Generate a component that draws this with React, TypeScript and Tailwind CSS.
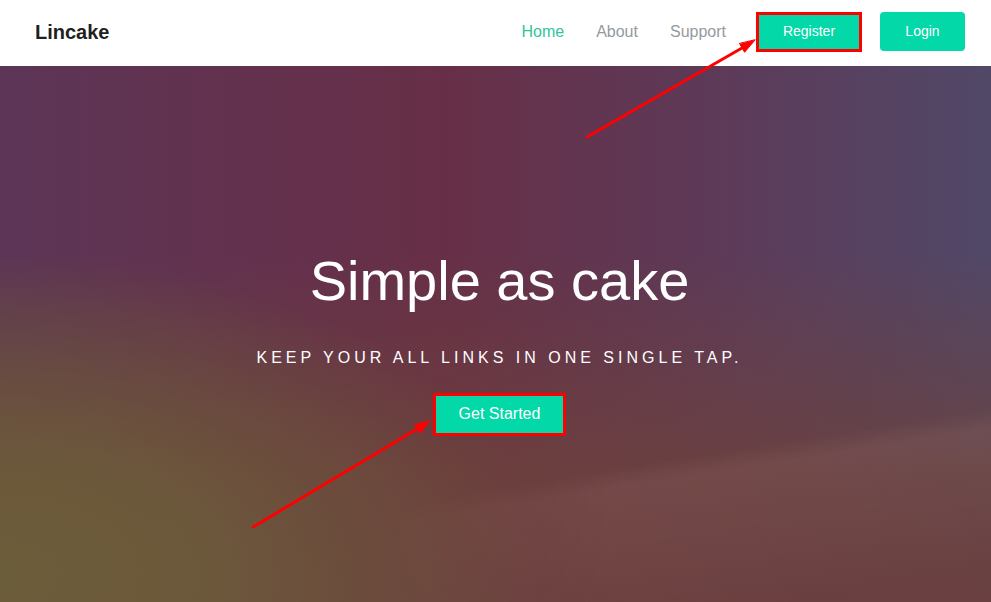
import React from "react";

const heroBg =
  "bg-[radial-gradient(ellipse_55%_60%_at_0%_95%,rgba(108,93,58,1)_0%,rgba(108,93,58,0.85)_35%,rgba(108,93,58,0)_100%),linear-gradient(to_bottom,rgba(110,66,58,0)_35%,rgba(110,66,58,0.75)_75%,rgba(108,64,62,0.95)_100%),linear-gradient(to_right,#5c3556_0%,#64304c_30%,#672f47_45%,#5d3a58_72%,#514868_100%)]";

const Hero = () => {
  return (
    <section className={`relative flex-1 overflow-hidden ${heroBg}`}>
      <div className="absolute inset-0 bg-[linear-gradient(171deg,rgba(255,210,190,0)_72%,rgba(255,210,190,0.07)_75%,rgba(255,210,190,0)_96%)] [mask-image:linear-gradient(to_right,transparent_38%,black_62%)]" />
      <div className="relative flex flex-col items-center pt-[187px] pl-[8px] text-white">
        <h1 className="text-[56px] leading-none font-normal">Simple as cake</h1>
        <p className="mt-[37px] text-[16px] leading-6 tracking-[4px] uppercase">
          Keep your all links in one single tap.
        </p>
        <button className="mt-[23px] flex h-[43px] w-[133px] items-center justify-center pb-[2px] border-[3px] border-[#ff0000] bg-[#02d8a8] text-[16px] text-white">
          Get Started
        </button>
      </div>
    </section>
  );
};

const Arrows = () => (
  <svg
    className="pointer-events-none absolute inset-0"
    width="991"
    height="602"
    viewBox="0 0 991 602"
  >
    <g stroke="#ff0000" strokeWidth="3" strokeLinecap="round" fill="#ff0000">
      <line x1="587" y1="137" x2="742" y2="48" />
      <polygon points="755,40 744.6,52.3 739.6,43.7" strokeWidth="1" />
      <line x1="253" y1="527" x2="417" y2="429" />
      <polygon points="430,421 419.9,433.5 414.7,424.9" strokeWidth="1" />
    </g>
  </svg>
);

export default function App() {
  return (
    <div className="relative flex h-[602px] w-full flex-col overflow-hidden bg-white font-['Liberation_Sans',Arial,sans-serif]">
      <header className="flex h-[66px] items-center justify-between pl-[35px] pr-[26px] pb-[3px]">
        <a className="text-[20px] font-bold text-[#1f1f1f]">Lincake</a>
        <nav className="flex items-center">
          <ul className="flex items-center gap-[32px] text-[16px]">
            <li className="text-[#2fc59b]">Home</li>
            <li className="text-[#959a9e]">About</li>
            <li className="text-[#959a9e]">Support</li>
          </ul>
          <button className="ml-[30px] flex h-[40px] w-[106px] items-center justify-center border-[3px] border-[#ff0000] bg-[#02d8a8] text-[14px] text-white">
            Register
          </button>
          <button className="ml-[18px] flex h-[39px] w-[85px] items-center justify-center rounded-[4px] bg-[#02d8a8] text-[14px] text-white">
            Login
          </button>
        </nav>
      </header>
      <Hero />
      <Arrows />
    </div>
  );
}
